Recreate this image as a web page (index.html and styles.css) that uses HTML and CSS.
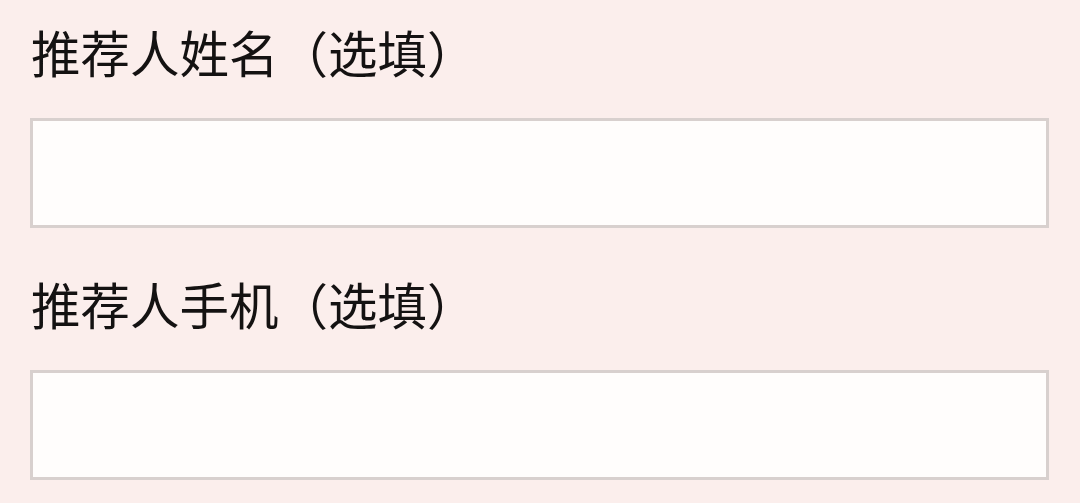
FILE: index.html
```html
<!DOCTYPE html>
<html lang="zh-CN">
<head>
<meta charset="utf-8">
<link rel="stylesheet" href="styles.css">
</head>
<body>
<form class="form">
  <div class="field">
    <label class="label">推荐人姓名（选填）</label>
    <input class="input" type="text">
  </div>
  <div class="field">
    <label class="label">推荐人手机（选填）</label>
    <input class="input" type="text">
  </div>
</form>
</body>
</html>
```
FILE: styles.css
```css
html, body {
  margin: 0;
  padding: 0;
  background: #fbeeec;
}
body {
  width: 1080px;
  height: 503px;
  overflow: hidden;
  font-family: "Noto Sans CJK SC", "Noto Sans", sans-serif;
  color: #141212;
}
.form {
  display: flex;
  flex-direction: column;
  padding: 22px 31px 0 30px;
  gap: 46px;
}
.field {
  display: flex;
  flex-direction: column;
  gap: 36px;
}
.label {
  display: block;
  font-size: 49.5px;
  line-height: 60px;
  height: 60px;
  padding-left: 1px;
}
.input {
  box-sizing: border-box;
  width: 1019px;
  height: 110px;
  margin: 0;
  border: 3px solid #d8d0ce;
  background: #fffdfc;
  outline: none;
  font: inherit;
}
```
